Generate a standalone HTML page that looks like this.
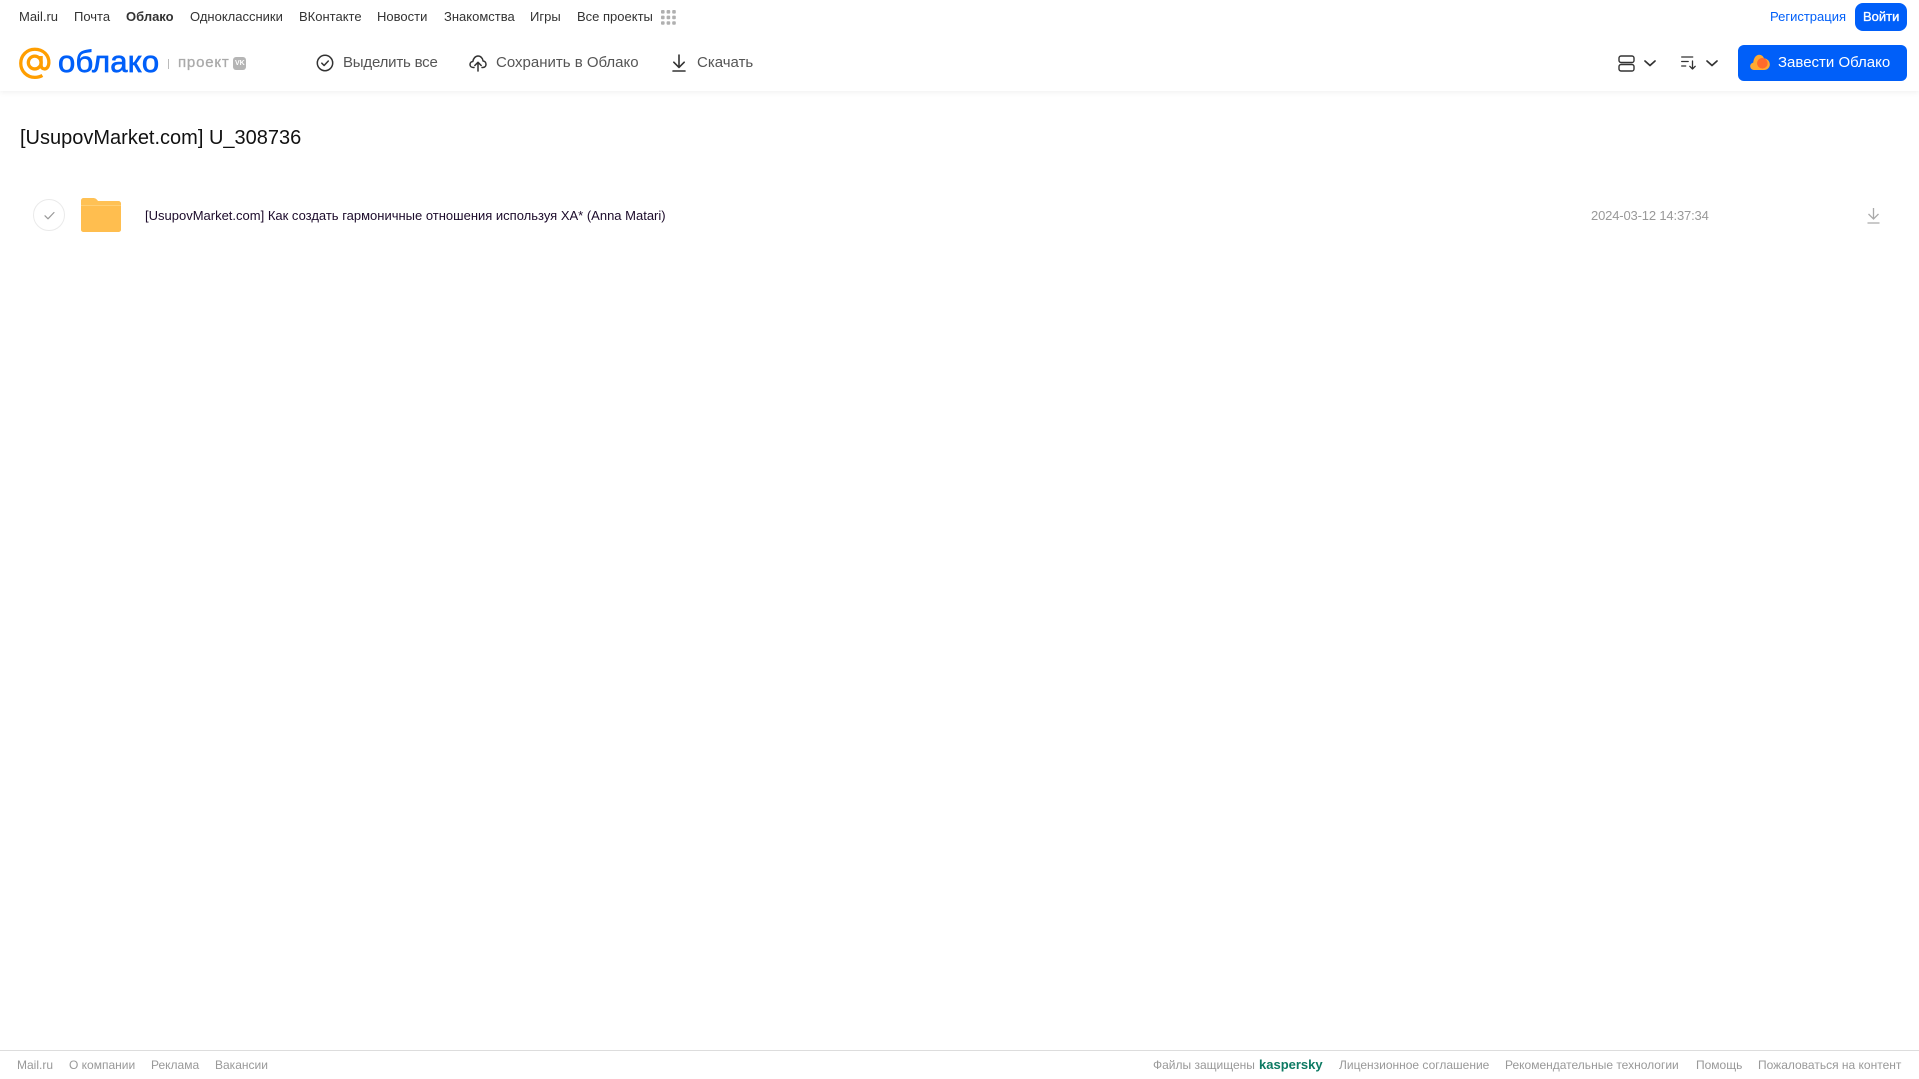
<!DOCTYPE html>
<html lang="ru"><head><meta charset="utf-8"><title>Облако</title>
<style>
html,body{margin:0;padding:0;background:#fff}
body{width:1919px;height:1079px;position:relative;overflow:hidden;font-family:"Liberation Sans",Arial,sans-serif}
.t{position:absolute;white-space:nowrap;line-height:1}
.n{font-size:13px;top:10px;color:#333}
.b{font-size:15px;top:55px;color:#555}
.f{font-size:12px;top:1059px;color:#999}
svg{position:absolute;display:block;overflow:visible}
</style></head><body>
<div style="position:absolute;left:0;top:0;width:1919px;height:91px;background:#fff;box-shadow:0 1px 6px rgba(0,0,0,.07)"></div>

<span class="t n" style="left:19px">Mail.ru</span>
<span class="t n" style="left:74px">Почта</span>
<span class="t n" style="left:126px;font-weight:bold">Облако</span>
<span class="t n" style="left:190px">Одноклассники</span>
<span class="t n" style="left:299px">ВКонтакте</span>
<span class="t n" style="left:377px">Новости</span>
<span class="t n" style="left:444px">Знакомства</span>
<span class="t n" style="left:530px">Игры</span>
<span class="t n" style="left:577px">Все проекты</span>
<svg style="left:661px;top:10px" width="15" height="15" fill="#b0b0b0"><rect x="0" y="0" width="3.6" height="3.6" rx="1"/><rect x="5.6" y="0" width="3.6" height="3.6" rx="1"/><rect x="11.2" y="0" width="3.6" height="3.6" rx="1"/><rect x="0" y="5.6" width="3.6" height="3.6" rx="1"/><rect x="5.6" y="5.6" width="3.6" height="3.6" rx="1"/><rect x="11.2" y="5.6" width="3.6" height="3.6" rx="1"/><rect x="0" y="11.2" width="3.6" height="3.6" rx="1"/><rect x="5.6" y="11.2" width="3.6" height="3.6" rx="1"/><rect x="11.2" y="11.2" width="3.6" height="3.6" rx="1"/></svg>

<span class="t n" style="left:1770px;color:#005ff9">Регистрация</span>
<div style="position:absolute;left:1855px;top:3px;width:52px;height:28px;border-radius:8px;background:#005ff9"></div>
<span class="t n" style="left:1863px;color:#fff;-webkit-text-stroke:.35px #fff">Войти</span>

<svg style="left:19px;top:47px" width="32" height="33" viewBox="0 0 33 33" fill="none" stroke="#ff9e00" stroke-width="3.4"><circle cx="16.2" cy="15.5" r="6.6"/><path d="M22.8 8.8v9.4c0 2.6 1.6 3.9 3.4 3.9 2.4 0 4.3-2 4.6-6.2C31.2 8 24.8 1.8 16.3 1.8 8.200 1.800 1.800 8.200 1.800 16.200 1.800 24.500 8.200 30.800 16.400 30.800c2.900 0 5.300-.6 7.700-2"/></svg>
<span class="t" style="left:58px;top:46px;font-size:31px;color:#005ff9;-webkit-text-stroke:.7px #005ff9;letter-spacing:.2px">облако</span>
<div style="position:absolute;left:168px;top:59px;width:1px;height:10px;background:#bbb"></div>
<span class="t" style="left:178px;top:55px;font-size:15px;color:#aaa;-webkit-text-stroke:.3px #aaa;letter-spacing:.8px">проект</span>
<div style="position:absolute;left:233px;top:57px;width:13px;height:13px;border-radius:3px;background:#b5b5b5"></div>
<span class="t" style="left:235px;top:60px;font-size:7px;font-weight:bold;color:#fff">VK</span>

<svg style="left:316px;top:54px" width="18" height="18" viewBox="0 0 18 18" fill="none" stroke="#333" stroke-width="1.500"><circle cx="9" cy="9" r="7.700"/><path d="M5.800 9.200l2.300 2.300 4.200-4.500" stroke-linecap="round" stroke-linejoin="round"/></svg>
<span class="t b" style="left:343px;letter-spacing:-.2px">Выделить все</span>
<svg style="left:469px;top:54px" width="18" height="18" viewBox="0 0 18 18" fill="none" stroke="#333" stroke-width="1.500" stroke-linecap="round" stroke-linejoin="round"><path d="M5 13.500H4.200C2.300 13.500 1 12.200 1 10.500c0-1.600 1.200-2.900 2.800-3C4.300 4.300 6.500 2 9 2c2.600 0 4.700 2.100 5.100 5 1.700.2 2.900 1.500 2.900 3.300 0 1.800-1.300 3.200-3.200 3.200H13"/><path d="M9 17V8.500M5.800 11.500L9 8.300l3.200 3.200"/></svg>
<span class="t b" style="left:496px">Сохранить в Облако</span>
<svg style="left:672px;top:54px" width="14" height="18" viewBox="0 0 14 18" fill="none" stroke="#333" stroke-width="1.600" stroke-linecap="round" stroke-linejoin="round"><path d="M7 1v12M1.800 8.200L7 13.400l5.200-5.200M1 17h12"/></svg>
<span class="t b" style="left:697px">Скачать</span>

<svg style="left:1618px;top:55px" width="17" height="17" viewBox="0 0 17 17" fill="none" stroke="#333" stroke-width="1.400"><rect x="1" y="1" width="15" height="6.500" rx="2"/><rect x="1" y="9.500" width="15" height="6.500" rx="2"/></svg>
<svg style="left:1644px;top:60px" width="12" height="7" viewBox="0 0 12 7" fill="none" stroke="#333" stroke-width="1.700" stroke-linecap="round" stroke-linejoin="round"><path d="M1 1l5 4.500L11 1"/></svg>
<svg style="left:1681px;top:56px" width="16" height="14" viewBox="0 0 16 14" fill="none" stroke="#333" stroke-width="1.300" stroke-linecap="round" stroke-linejoin="round"><path d="M.7 1h11M.7 5.500h6.500M.7 10h4M11.500 5v8M8.800 10.300l2.700 2.700 2.700-2.700"/></svg>
<svg style="left:1706px;top:60px" width="12" height="7" viewBox="0 0 12 7" fill="none" stroke="#333" stroke-width="1.700" stroke-linecap="round" stroke-linejoin="round"><path d="M1 1l5 4.500L11 1"/></svg>

<div style="position:absolute;left:1738px;top:45px;width:169px;height:36px;border-radius:6px;background:#005ff9"></div>
<svg style="left:1750px;top:54px" width="20" height="17" viewBox="0 0 20 17"><path d="M4 16C1.800 16 .2 14.300.2 12.300c0-1.900 1.300-3.300 3-3.700C3.800 4 6 .8 9.200.8c2.300 0 4 1.500 4.800 3.600 3 .1 5.800 2.700 5.800 6 0 3.300-2.500 5.600-5.800 5.600z" fill="#ffa930"/><circle cx="12.400" cy="9.300" r="5.300" fill="#ff6a2a"/></svg>
<span class="t b" style="left:1778px;color:#fff">Завести Облако</span>

<span class="t" style="left:20px;top:128px;font-size:20px;color:#111">[UsupovMarket.com] U_308736</span>

<div style="position:absolute;left:33px;top:199px;width:30px;height:30px;border:1px solid #eaeaea;border-radius:50%"></div>
<svg style="left:43.500px;top:211px" width="11" height="9" viewBox="0 0 11 9" fill="none" stroke="#999" stroke-width="1.200" stroke-linecap="round" stroke-linejoin="round"><path d="M1 4.800l3 3L10 1.500"/></svg>
<svg style="left:81px;top:198px" width="40" height="34" viewBox="0 0 40 34"><path d="M2.500 0h9.500c2.500 0 3.500 1 5 3h20.500A2.500 2.500 0 0 1 40 5.500v26a2.500 2.500 0 0 1-2.500 2.500h-35A2.500 2.500 0 0 1 0 31.500V2.500A2.500 2.500 0 0 1 2.500 0z" fill="#ffc154"/><path d="M0 8h40v23.500a2.500 2.500 0 0 1-2.500 2.500h-35A2.500 2.500 0 0 1 0 31.500z" fill="#ffbe4f"/><path d="M0 7h40v1H0z" fill="#ffcf75"/></svg>
<span class="t" style="left:145px;top:209px;font-size:13px;color:#1c0b2b">[UsupovMarket.com] Как создать гармоничные отношения используя ХА* (Anna Matari)</span>
<span class="t" style="left:1591px;top:209px;font-size:13px;color:#999;letter-spacing:-.16px">2024-03-12 14:37:34</span>
<svg style="left:1866.500px;top:207px" width="13" height="17" viewBox="0 0 13 17" fill="none" stroke="#aaa" stroke-width="1.300"><path d="M6.500 1v11M1.500 7l5 5 5-5M.5 16h12"/></svg>

<div style="position:absolute;left:0;top:1050px;width:1919px;height:1px;background:#ddd"></div>
<span class="t f" style="left:17px">Mail.ru</span>
<span class="t f" style="left:69px">О компании</span>
<span class="t f" style="left:151px">Реклама</span>
<span class="t f" style="left:215px">Вакансии</span>
<span class="t f" style="left:1153px">Файлы защищены</span>
<span class="t f" style="left:1259px;font-size:13px;font-weight:bold;color:#0d7a63;top:1058px">kaspersky</span>
<span class="t f" style="left:1339px">Лицензионное соглашение</span>
<span class="t f" style="left:1505px">Рекомендательные технологии</span>
<span class="t f" style="left:1696px">Помощь</span>
<span class="t f" style="left:1758px">Пожаловаться на контент</span>
</body></html>
